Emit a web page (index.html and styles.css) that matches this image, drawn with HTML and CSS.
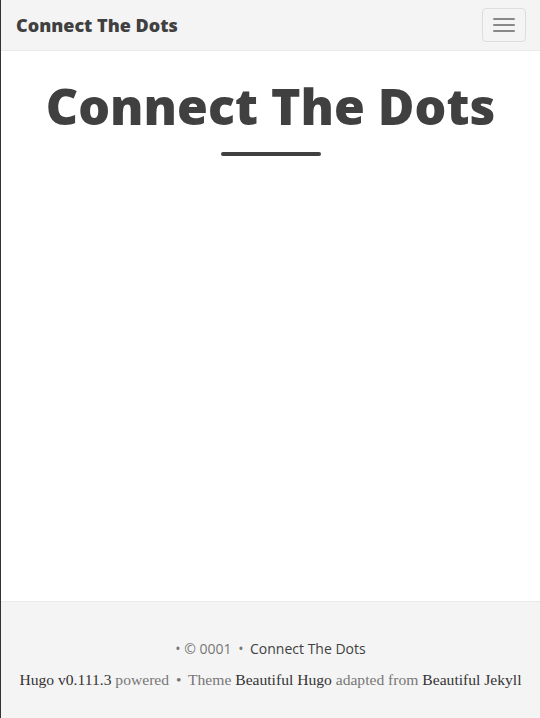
FILE: index.html
```html
<!DOCTYPE html>
<html lang="en">
<head>
<meta charset="utf-8">
<title>Connect The Dots</title>
<link rel="stylesheet" href="styles.css">
</head>
<body>
<nav class="navbar">
  <a class="brand" href="#">Connect The Dots</a>
  <button class="toggle" type="button" aria-label="Toggle navigation">
    <span class="bar"></span><span class="bar"></span><span class="bar"></span>
  </button>
</nav>
<main class="main">
  <header class="intro">
    <h1 class="page-title">Connect The Dots</h1>
    <hr class="small">
  </header>
</main>
<footer class="footer">
  <p class="copyright">
    <span class="muted">&bull; &copy; 0001</span>
    <span class="muted sep">&bull;</span>
    <a class="site-link" href="#">Connect The Dots</a>
  </p>
  <p class="credits">
    <a href="#">Hugo v0.111.3</a> <span class="muted">powered</span>
    <span class="muted sep">&bull;</span>
    <span class="muted">Theme</span> <a href="#">Beautiful Hugo</a>
    <span class="muted">adapted from</span> <a href="#">Beautiful Jekyll</a>
  </p>
</footer>
</body>
</html>
```
FILE: styles.css
```css
html, body {
  margin: 0;
  padding: 0;
}
body {
  min-height: 100vh;
  display: flex;
  flex-direction: column;
  border-left: 1px solid #333;
  box-sizing: border-box;
  background: #fff;
  color: #404040;
  font-family: "Open Sans", sans-serif;
}
a {
  text-decoration: none;
  color: #404040;
}
.navbar {
  height: 51px;
  box-sizing: border-box;
  background: #f4f4f4;
  border-bottom: 1px solid #eaeaea;
  display: flex;
  align-items: center;
  justify-content: space-between;
  padding: 0 14px 0 15px;
}
.brand {
  font-weight: 800;
  font-size: 18px;
  color: #404040;
}
.toggle {
  width: 44px;
  height: 34px;
  box-sizing: border-box;
  border: 1px solid #ddd;
  border-radius: 4px;
  background: transparent;
  padding: 0;
  display: flex;
  flex-direction: column;
  align-items: center;
  justify-content: center;
  gap: 4px;
}
.bar {
  display: block;
  width: 22px;
  height: 2px;
  background: #888;
  border-radius: 1px;
}
.main {
  flex: 1;
}
.intro {
  text-align: center;
  padding-top: 28px;
}
.page-title {
  margin: 0;
  font-size: 50px;
  font-weight: 800;
  line-height: 1.1;
  color: #404040;
}
hr.small {
  width: 100px;
  margin: 18px auto 0;
  border: 0;
  border-top: 4px solid #404040;
  border-radius: 3px;
}
.footer {
  height: 117px;
  box-sizing: border-box;
  background: #f4f4f4;
  border-top: 1px solid #eaeaea;
  text-align: center;
  padding-top: 36px;
}
.copyright {
  margin: 0;
  font-size: 14px;
  line-height: 22px;
}
.muted {
  color: #777;
}
.sep {
  margin: 0 3px;
}
.credits {
  margin: 9px 0 0;
  font-family: "Liberation Serif", serif;
  font-size: 15.6px;
  line-height: 22px;
}
.credits a {
  color: #333;
}
```
